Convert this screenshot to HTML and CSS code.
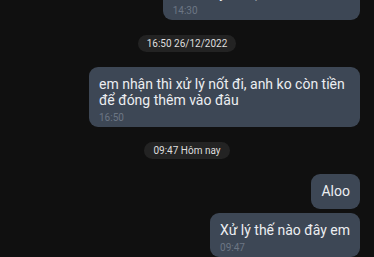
FILE: index.html
```html
<!DOCTYPE html>
<html>
<head>
    <title>Tin nhắn</title>
    <link rel="stylesheet" href="styles.css">
</head>
<body>
    <div class="chat">
        <div class="msg msg-first">
            <div class="msg-text">Em chuyển hộ rồi nhé, anh ơi</div>
            <div class="msg-time">14:30</div>
        </div>

        <div class="stamp">16:50 26/12/2022</div>

        <div class="msg">
            <div class="msg-text">em nhận thì xử lý nốt đi, anh ko còn tiền để đóng thêm vào đâu</div>
            <div class="msg-time">16:50</div>
        </div>

        <div class="stamp">09:47 Hôm nay</div>

        <div class="msg msg-grouped">
            <div class="msg-text">Aloo</div>
        </div>
        <div class="msg">
            <div class="msg-text">Xử lý thế nào đây em</div>
            <div class="msg-time">09:47</div>
        </div>
    </div>
</body>
</html>
```

FILE: styles.css
```css
body {
    margin: 0;
    height: 257px;
    background-color: #101010;
    overflow: hidden;
    font-family: Roboto, 'Noto Sans', sans-serif;
}

.chat {
    display: flex;
    flex-direction: column;
    align-items: flex-end;
    padding: 0 14px;
}

.msg {
    max-width: 251px;
    padding: 9px 10px 2px;
    background-color: #3d4755;
    border-radius: 9px;
    color: #eceef1;
}

.msg + .msg {
    margin-top: 4px;
}

.msg-first {
    margin-top: -24px;
}

.msg-grouped {
    padding-bottom: 10px;
}

.msg-text {
    font-size: 14px;
    line-height: 16px;
}

.msg-time {
    margin-top: 3px;
    font-size: 10px;
    line-height: 14px;
    color: #6c7684;
}

.stamp {
    align-self: center;
    margin: 15px 0;
    padding: 0 9px;
    font-size: 10px;
    line-height: 17px;
    color: #dedede;
    background-color: #232323;
    border-radius: 9px;
}
```
